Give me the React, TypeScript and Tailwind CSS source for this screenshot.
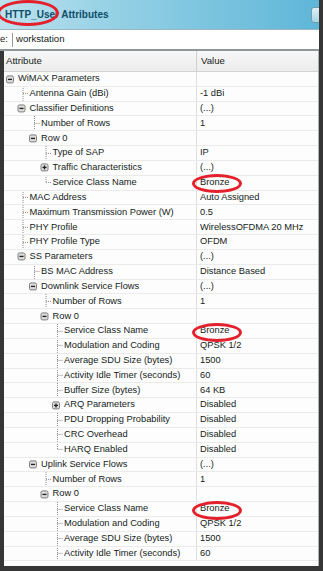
type Kind = 'open' | 'closed' | 'leaf' | 'last'

type AttrRow = {
    label: string
    level: number
    kind: Kind
    value?: string
    marked?: boolean
}

const rows: AttrRow[] = [
    { label: 'WiMAX Parameters', level: 0, kind: 'open' },
    { label: 'Antenna Gain (dBi)', level: 1, kind: 'leaf', value: '-1 dBi' },
    { label: 'Classifier Definitions', level: 1, kind: 'open', value: '(...)' },
    { label: 'Number of Rows', level: 2, kind: 'leaf', value: '1' },
    { label: 'Row 0', level: 2, kind: 'open' },
    { label: 'Type of SAP', level: 3, kind: 'leaf', value: 'IP' },
    { label: 'Traffic Characteristics', level: 3, kind: 'closed', value: '(...)' },
    { label: 'Service Class Name', level: 3, kind: 'last', value: 'Bronze', marked: true },
    { label: 'MAC Address', level: 1, kind: 'leaf', value: 'Auto Assigned' },
    { label: 'Maximum Transmission Power (W)', level: 1, kind: 'leaf', value: '0.5' },
    { label: 'PHY Profile', level: 1, kind: 'leaf', value: 'WirelessOFDMA 20 MHz' },
    { label: 'PHY Profile Type', level: 1, kind: 'leaf', value: 'OFDM' },
    { label: 'SS Parameters', level: 1, kind: 'open', value: '(...)' },
    { label: 'BS MAC Address', level: 2, kind: 'leaf', value: 'Distance Based' },
    { label: 'Downlink Service Flows', level: 2, kind: 'open', value: '(...)' },
    { label: 'Number of Rows', level: 3, kind: 'leaf', value: '1' },
    { label: 'Row 0', level: 3, kind: 'open' },
    { label: 'Service Class Name', level: 4, kind: 'leaf', value: 'Bronze', marked: true },
    { label: 'Modulation and Coding', level: 4, kind: 'leaf', value: 'QPSK 1/2' },
    { label: 'Average SDU Size (bytes)', level: 4, kind: 'leaf', value: '1500' },
    { label: 'Activity Idle Timer (seconds)', level: 4, kind: 'leaf', value: '60' },
    { label: 'Buffer Size (bytes)', level: 4, kind: 'leaf', value: '64 KB' },
    { label: 'ARQ Parameters', level: 4, kind: 'closed', value: 'Disabled' },
    { label: 'PDU Dropping Probability', level: 4, kind: 'leaf', value: 'Disabled' },
    { label: 'CRC Overhead', level: 4, kind: 'leaf', value: 'Disabled' },
    { label: 'HARQ Enabled', level: 4, kind: 'last', value: 'Disabled' },
    { label: 'Uplink Service Flows', level: 2, kind: 'open', value: '(...)' },
    { label: 'Number of Rows', level: 3, kind: 'leaf', value: '1' },
    { label: 'Row 0', level: 3, kind: 'open' },
    { label: 'Service Class Name', level: 4, kind: 'leaf', value: 'Bronze', marked: true },
    { label: 'Modulation and Coding', level: 4, kind: 'leaf', value: 'QPSK 1/2' },
    { label: 'Average SDU Size (bytes)', level: 4, kind: 'leaf', value: '1500' },
    { label: 'Activity Idle Timer (seconds)', level: 4, kind: 'leaf', value: '60' },
]

const ROW_H = 14.84

function TreeGlyph({ level, kind }: { level: number, kind: Kind }) {
    const w = 14 + level * 11.5
    const mid = ROW_H / 2
    const lx = w - 6.5

    return (
        <svg width={w} height={ROW_H} className="shrink-0">
            {kind === 'leaf' || kind === 'last' ? (
                <g stroke="#8c8c8c" strokeWidth="1" strokeDasharray="1 1" fill="none">
                    <line x1={lx} y1={0} x2={lx} y2={kind === 'last' ? mid : ROW_H} />
                    <line x1={lx} y1={mid} x2={w - 1.5} y2={mid} />
                </g>
            ) : (
                <g>
                    <rect x={w - 11.5} y={mid - 3.5} width={7} height={7} rx={1.5} fill="#dcdcdc" stroke="#7e7e7e" strokeWidth="1" />
                    <line x1={w - 10} y1={mid} x2={w - 6} y2={mid} stroke="#1e1e1e" strokeWidth="1.3" />
                    {kind === 'closed' && (
                        <line x1={w - 8} y1={mid - 2} x2={w - 8} y2={mid + 2} stroke="#1e1e1e" strokeWidth="1.3" />
                    )}
                </g>
            )}
        </svg>
    )
}

export default function App() {
    return (
        <div className="w-[323px] h-[571px] overflow-hidden bg-[#363636] pr-[4px] pb-[5px] flex flex-col font-['Liberation_Sans',Arial,sans-serif] text-[#141c20]">
            {/* title bar */}
            <div className="relative h-[30px] shrink-0 flex items-center overflow-hidden border-b border-[#9bb6c2] bg-[linear-gradient(to_right,#bde2ef_0%,#95d1e5_35%,#5fb6d8_100%)]">
                <span className="relative pl-[5px] text-[10px] font-bold text-[#0f4d69] whitespace-nowrap">
                    HTTP_User Attributes
                    <span className="absolute left-[-3px] top-[-7px] w-[62px] h-[26px] rounded-[50%] border-[3px] border-[#e3202b]" />
                </span>
                <div className="ml-auto mr-[-6px] w-[14px] h-[16px] rounded-[3px] border border-[#6e9db3] bg-[linear-gradient(to_bottom,#dff0f6,#a9d4e4)]" />
            </div>

            {/* filter */}
            <div className="h-[21px] shrink-0 bg-white border-b-2 border-[#8d9898] flex items-center text-[9.6px]">
                <span className="w-[12px]">e:</span>
                <span className="w-px h-[14px] bg-[#9a9a9a] mr-[3px]" />
                <span>workstation</span>
            </div>

            <div className="flex-1 min-h-0 pl-[4px] flex flex-col">
                <div className="flex-1 min-h-0 bg-[#fdfdfd] border-r border-[#aeb6b9] flex flex-col overflow-hidden">
                    {/* header */}
                    <div className="h-[21px] shrink-0 flex items-stretch border-b border-[#d3d3d3] bg-[linear-gradient(to_bottom,#f7f7f7,#ececec)] text-[9.6px]">
                        <div className="w-[193px] shrink-0 border-r border-[#d0d0d0] pl-[2px] flex items-center">Attribute</div>
                        <div className="flex-1 pl-[4px] flex items-center">Value</div>
                    </div>

                    {rows.map((row, i) => (
                        <div key={i} className="h-[14.84px] shrink-0 flex items-stretch border-b border-[#ebebeb] text-[9.3px] leading-none">
                            <div className="w-[193px] shrink-0 border-r border-[#dedede] flex items-center overflow-hidden whitespace-nowrap">
                                <TreeGlyph level={row.level} kind={row.kind} />
                                <span>{row.label}</span>
                            </div>
                            <div className="relative flex-1 pl-[3px] flex items-center whitespace-nowrap">
                                {row.value}
                                {row.marked && (
                                    <span className="absolute left-[-5px] top-[-1.5px] w-[50px] h-[19px] rounded-[50%] border-[3px] border-[#e3202b]" />
                                )}
                            </div>
                        </div>
                    ))}
                </div>
            </div>
        </div>
    )
}
